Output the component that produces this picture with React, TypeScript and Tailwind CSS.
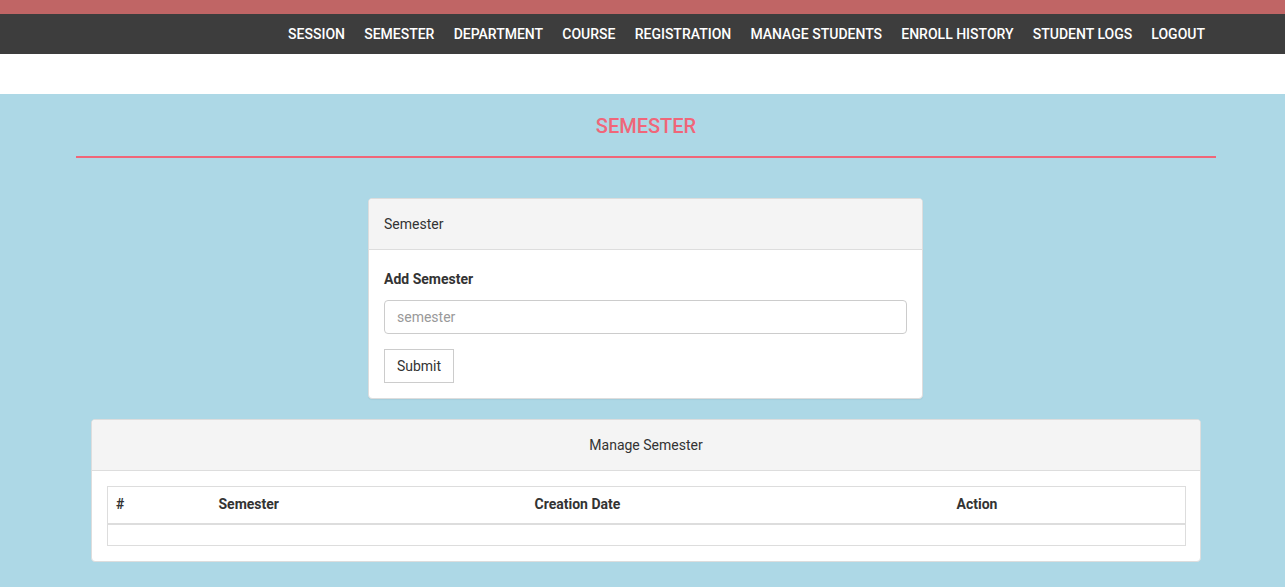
import React from "react";

const navItems = [
  "SESSION",
  "SEMESTER",
  "DEPARTMENT",
  "COURSE",
  "REGISTRATION",
  "MANAGE STUDENTS",
  "ENROLL HISTORY",
  "STUDENT LOGS",
  "LOGOUT",
];

export default function App() {
  return (
    <div
      className="min-h-[587px] bg-[#add8e6] text-[#333]"
      style={{ fontFamily: "Roboto, 'Liberation Sans', sans-serif" }}
    >
      <div className="h-[14px] bg-[#c06565]" />
      <nav className="flex h-[40px] items-center justify-end bg-[#3d3d3d] pr-[80px]">
        <ul className="flex items-center gap-[19.2px]">
          {navItems.map((n) => (
            <li key={n} className="text-[14px] font-medium leading-none text-white">
              {n}
            </li>
          ))}
        </ul>
      </nav>
      <div className="h-[40px] bg-white" />

      <div className="ml-[76px] w-[1140px] pt-[20px]">
        <h1 className="text-center text-[20px] font-medium leading-[24px] text-[#f06679]">
          SEMESTER
        </h1>
        <div className="mt-[18px] h-[2px] bg-[#f06679]" />
      </div>

      <div className="mt-[40px] flex justify-center pl-[6px]">
        <div className="w-[555px] overflow-hidden rounded-[4px] border border-[#ddd] bg-white shadow-[0_1px_1px_rgba(0,0,0,0.05)]">
          <div className="flex h-[51px] items-center border-b border-[#ddd] bg-[#f4f4f4] px-[15px] text-[14px] text-[#333]">
            Semester
          </div>
          <div className="px-[15px] pb-[15px] pt-[20px]">
            <div className="text-[14px] font-bold leading-[18px] text-[#333]">Add Semester</div>
            <div className="mt-[12px] flex h-[34px] items-center rounded-[4px] border border-[#ccc] px-[12px] text-[14px] text-[#999]">
              semester
            </div>
            <div className="mt-[15px] flex h-[34px] w-[70px] items-center justify-center border border-[#ccc] text-[14px] text-[#333]">
              Submit
            </div>
          </div>
        </div>
      </div>

      <div className="ml-[91px] mt-[20px] w-[1110px] overflow-hidden rounded-[4px] border border-[#ddd] bg-white">
        <div className="flex h-[51px] items-center justify-center border-b border-[#ddd] bg-[#f4f4f4] text-[14px] text-[#333]">
          Manage Semester
        </div>
        <div className="px-[15px] pb-[15px] pt-[15px]">
          <table className="w-[1079px] border-collapse border border-[#ddd] text-[14px]">
            <thead>
              <tr className="h-[37px] border-b-2 border-[#ddd] text-left font-bold text-[#333]">
                <th className="w-[103px] px-[8px] font-bold">#</th>
                <th className="w-[316px] px-[8px] font-bold">Semester</th>
                <th className="w-[422px] px-[8px] font-bold">Creation Date</th>
                <th className="px-[8px] font-bold">Action</th>
              </tr>
            </thead>
            <tbody>
              <tr className="h-[22px]">
                <td colSpan={4} />
              </tr>
            </tbody>
          </table>
        </div>
      </div>
      <div className="h-[25px]" />
    </div>
  );
}
